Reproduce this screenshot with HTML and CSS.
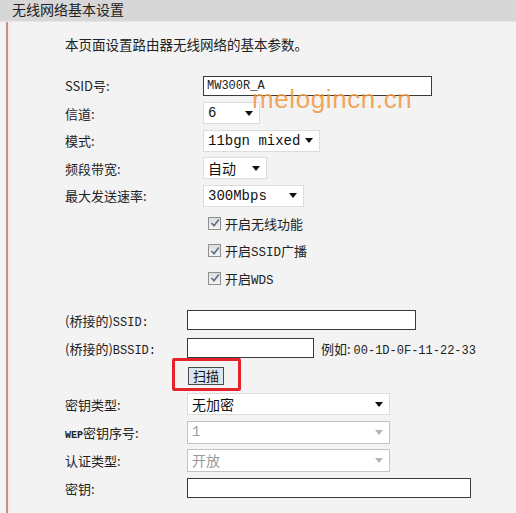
FILE: index.html
```html
<!DOCTYPE html>
<html lang="zh-CN">
<head>
    <meta charset="UTF-8">
    <title>无线网络基本设置</title>
    <link rel="stylesheet" href="styles.css">
</head>
<body>

    <div class="title-bar">无线网络基本设置</div>

    <div class="panel">
        <p class="intro">本页面设置路由器无线网络的基本参数。</p>

        <!-- basic wireless settings -->
        <div class="form-grid top">
            <label>SSID号:</label>
            <div><input type="text" class="text-input ssid" value="MW300R_A"></div>

            <label>信道:</label>
            <div><div class="select w57"><span>6</span><i class="arrow"></i></div></div>

            <label>模式:</label>
            <div><div class="select w117"><span>11bgn mixed</span><i class="arrow"></i></div></div>

            <label>频段带宽:</label>
            <div><div class="select w64"><span class="cjk">自动</span><i class="arrow"></i></div></div>

            <label>最大发送速率:</label>
            <div><div class="select w101"><span>300Mbps</span><i class="arrow"></i></div></div>

            <span></span>
            <div class="check-row"><span class="checkbox"><svg width="10" height="10" viewBox="0 0 10 10"><path d="M1.5 5 L4 7.8 L8.8 1.5" fill="none" stroke="#5c6f86" stroke-width="1.6"/></svg></span><span>开启无线功能</span></div>

            <span></span>
            <div class="check-row"><span class="checkbox"><svg width="10" height="10" viewBox="0 0 10 10"><path d="M1.5 5 L4 7.8 L8.8 1.5" fill="none" stroke="#5c6f86" stroke-width="1.6"/></svg></span><span>开启<span class="mono">SSID</span>广播</span></div>

            <span></span>
            <div class="check-row"><span class="checkbox"><svg width="10" height="10" viewBox="0 0 10 10"><path d="M1.5 5 L4 7.8 L8.8 1.5" fill="none" stroke="#5c6f86" stroke-width="1.6"/></svg></span><span>开启<span class="mono">WDS</span></span></div>
        </div>

        <!-- WDS bridge settings -->
        <div class="form-grid bottom">
            <label>(桥接的)<span class="mono">SSID:</span></label>
            <div><input type="text" class="text-input w229"></div>

            <label>(桥接的)<span class="mono">BSSID:</span></label>
            <div class="inline"><input type="text" class="text-input w127"><span class="hint">例如: <span class="mono">00-1D-0F-11-22-33</span></span></div>

            <span class="scan-row"></span>
            <div class="scan-row">
                <span class="scan-wrap"><button class="scan-btn">扫描</button><span class="highlight"></span></span>
            </div>

            <label>密钥类型:</label>
            <div><div class="select w203"><span class="cjk">无加密</span><i class="arrow"></i></div></div>

            <label><span class="mono small">WEP</span>密钥序号:</label>
            <div><div class="select w203 disabled"><span>1</span><i class="arrow"></i></div></div>

            <label>认证类型:</label>
            <div><div class="select w203 disabled"><span class="cjk">开放</span><i class="arrow"></i></div></div>

            <label>密钥:</label>
            <div><input type="text" class="text-input w284"></div>
        </div>

        <div class="watermark">melogincn.cn</div>
    </div>

</body>
</html>
```

FILE: styles.css
```css
body {
    margin: 0;
    background-color: #f3f3f3;
    font-family: "Noto Sans CJK SC", "Liberation Sans", sans-serif;
    font-size: 13px;
    color: #222;
}
.title-bar {
    height: 21px;
    line-height: 18px;
    padding-left: 12px;
    background-color: #d7d7d7;
    font-size: 14px;
    color: #222;
    border-bottom: 1px solid #e6e6e6;
}
.panel {
    position: relative;
    margin-left: 6px;
    padding-left: 57px;
    padding-bottom: 20px;
    border-left: 2px solid #b99494;
    box-shadow: inset 3px 0 0 #f7e7e7;
    min-height: 491px;
    box-sizing: border-box;
}
.intro {
    margin: 0;
    padding-top: 12px;
    line-height: 20px;
    font-size: 13.5px;
}
.form-grid {
    display: grid;
    align-items: center;
}
.form-grid.top {
    margin-top: 18px;
    grid-template-columns: 138px auto;
    grid-auto-rows: 27.5px;
}
.form-grid.bottom {
    margin-top: 14px;
    grid-template-columns: 122px auto;
    grid-auto-rows: 28px;
}
.form-grid label {
    font-size: 13px;
}
.mono {
    font-family: "Liberation Mono", "DejaVu Sans Mono", monospace;
    font-size: 12px;
}
.mono.small {
    font-size: 10px;
    font-weight: bold;
}
.text-input {
    display: block;
    height: 20px;
    box-sizing: border-box;
    border: 1px solid #3a3a3a;
    background-color: #fff;
    padding: 0 3px;
    font-family: "Liberation Mono", monospace;
    font-size: 12px;
    color: #222;
    outline: none;
}
.ssid { width: 229px; }
.w229 { width: 229px; }
.w127 { width: 127px; }
.w284 { width: 284px; }
.inline {
    display: flex;
    align-items: center;
}
.hint {
    margin-left: 7px;
    font-size: 13px;
}
.select {
    display: flex;
    align-items: center;
    justify-content: space-between;
    height: 22px;
    box-sizing: border-box;
    padding: 0 6px 0 4px;
    background-color: #fff;
    border: 1px solid #dcdcdc;
    font-family: "Liberation Mono", monospace;
    font-size: 14px;
    color: #111;
}
.select .cjk {
    font-family: "Noto Sans CJK SC", sans-serif;
    font-size: 14px;
}
.arrow {
    width: 0;
    height: 0;
    border-left: 4px solid transparent;
    border-right: 4px solid transparent;
    border-top: 5px solid #111;
}
.w57 { width: 57px; }
.w117 { width: 117px; }
.w64 { width: 64px; }
.w101 { width: 101px; }
.w203 { width: 203px; }
.select.disabled {
    border-color: #c4c4c4;
    color: #9a9a9a;
    height: 23px;
}
.select.disabled .arrow {
    border-top-color: #b5b5b5;
}
.check-row {
    display: flex;
    align-items: center;
    padding-left: 5px;
    font-size: 13px;
}
.check-row .mono {
    font-size: 12.5px;
}
.checkbox {
    display: inline-flex;
    align-items: center;
    justify-content: center;
    width: 11px;
    height: 11px;
    margin-right: 4px;
    border: 1px solid #8f8f8f;
    background: linear-gradient(#dedede, #f4f4f4);
}
.scan-row {
    height: 24px;
    display: flex;
    align-items: center;
}
.scan-wrap {
    position: relative;
    display: inline-block;
    margin-left: 1px;
}
.scan-btn {
    display: block;
    height: 18px;
    padding: 0 4px;
    border: 1px solid #4a4a4a;
    background-color: #dbe5ef;
    font-family: "Noto Sans CJK SC", sans-serif;
    font-size: 13px;
    line-height: 14px;
    color: #111;
}
.highlight {
    position: absolute;
    left: -16px;
    top: -9px;
    right: -17px;
    bottom: -6px;
    border: 3px solid #e3242b;
    border-radius: 2px;
}
.watermark {
    position: absolute;
    left: 244px;
    top: 62px;
    font-family: "Liberation Sans", sans-serif;
    font-size: 26px;
    letter-spacing: 0.6px;
    color: rgba(242, 150, 60, 0.85);
}
```
